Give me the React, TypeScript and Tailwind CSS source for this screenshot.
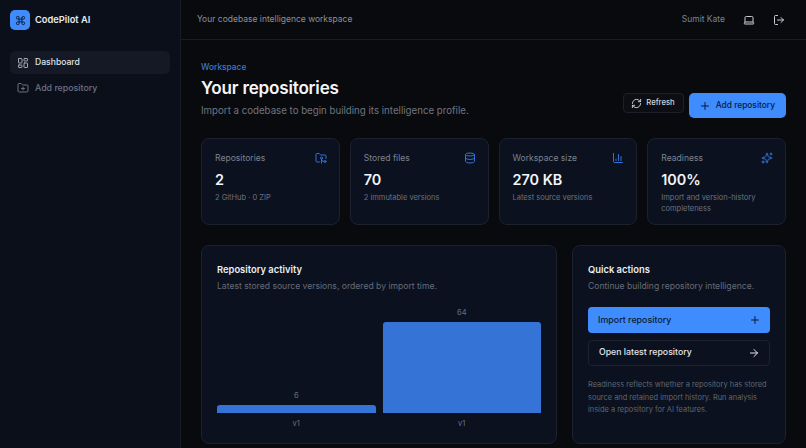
import React from "react";
import {
  ArrowRight,
  ChartColumn,
  Command,
  Database,
  FolderGit2,
  FolderPlus,
  LayoutDashboard,
  Laptop,
  LogOut,
  Plus,
  RefreshCw,
  Sparkles,
} from "lucide-react";

const stats = [
  { label: "Repositories", value: "2", note: "2 GitHub · 0 ZIP", Icon: FolderGit2 },
  { label: "Stored files", value: "70", note: "2 immutable versions", Icon: Database },
  { label: "Workspace size", value: "270 KB", note: "Latest source versions", Icon: ChartColumn },
  { label: "Readiness", value: "100%", note: "Import and version-history completeness", Icon: Sparkles },
];

const bars = [
  { count: 6, height: 8 },
  { count: 64, height: 91 },
];

function Sidebar() {
  return (
    <aside className="w-[181px] shrink-0 border-r border-[#171b25] bg-[#0b0f1a] px-[10px]">
      <div className="flex h-[40px] items-center gap-[5px]">
        <div className="flex h-[20px] w-[20px] items-center justify-center rounded-[5px] bg-[#3f8cff] text-[#0b1a33]">
          <Command className="h-[11px] w-[11px]" strokeWidth={2} />
        </div>
        <span className="text-[9.3px] font-semibold text-[#e8ebf0]">CodePilot AI</span>
      </div>
      <nav className="mt-[11px] flex flex-col gap-[2px]">
        <div className="flex h-[23px] items-center gap-[6px] rounded-[5px] bg-[#141925] px-[7px] text-[8.6px] font-medium text-[#dfe3ea]">
          <LayoutDashboard className="h-[12px] w-[12px] text-[#a2a8b4]" />
          Dashboard
        </div>
        <div className="flex h-[23px] items-center gap-[6px] px-[7px] text-[8.8px] font-medium text-[#6b7280]">
          <FolderPlus className="h-[12px] w-[12px]" />
          Add repository
        </div>
      </nav>
    </aside>
  );
}

function Header() {
  return (
    <header className="flex h-[40px] shrink-0 items-center justify-between border-b border-[#1a1d25] pl-[16px] pr-[21px]">
      <span className="text-[8.5px] text-[#8a909c]">Your codebase intelligence workspace</span>
      <div className="flex items-center gap-[18px] text-[#c9cdd5]">
        <span className="text-[8.5px] text-[#7d838f]">Sumit Kate</span>
        <Laptop className="h-[12px] w-[12px]" />
        <LogOut className="h-[12px] w-[12px]" />
      </div>
    </header>
  );
}

function StatCard({ label, value, note, Icon }: (typeof stats)[number]) {
  return (
    <div className="rounded-[8px] border border-[#1b212d] bg-[#0b111e] pl-[13px] pr-[12px] pt-[13px]">
      <div className="flex h-[12px] items-center justify-between">
        <span className="text-[8.6px] text-[#7d838f]">{label}</span>
        <Icon className="h-[12px] w-[12px] text-[#3272d4]" />
      </div>
      <div className="mt-[6px] text-[14.4px] font-semibold leading-[20px] text-[#f2f4f7]">{value}</div>
      <div className="mt-[3px] text-[7.5px] leading-[10.5px] text-[#6b7280]">{note}</div>
    </div>
  );
}

export default function App() {
  return (
    <div className="flex h-[448px] w-[806px] overflow-hidden bg-[#090a0e] font-['Inter',sans-serif]">
      <Sidebar />
      <div className="flex min-w-0 flex-1 flex-col">
        <Header />
        <main className="flex flex-1 flex-col px-[20px] pt-[21px]">
          <div className="flex items-end justify-between">
            <div>
              <div className="text-[8.4px] font-medium leading-[12px] text-[#3a78d8]">Workspace</div>
              <h1 className="mt-[3px] text-[17.1px] font-semibold leading-[24px] tracking-[-0.2px] text-[#f4f5f7]">
                Your repositories
              </h1>
              <p className="mt-[4px] text-[9.7px] leading-[14px] text-[#6f7581]">
                Import a codebase to begin building its intelligence profile.
              </p>
            </div>
            <div className="flex items-start gap-[5px]">
              <button className="flex h-[20px] items-center gap-[4px] rounded-[4px] border border-[#1c2029] bg-[#0c0e13] pl-[7px] pr-[8px] text-[7.7px] font-medium text-[#d4d7dd]">
                <RefreshCw className="h-[11px] w-[11px]" />
                Refresh
              </button>
              <button className="flex h-[25px] items-center gap-[5px] rounded-[5px] bg-[#3f8cff] pl-[10px] pr-[11px] text-[8.4px] font-medium text-[#0b1a33]">
                <Plus className="h-[12px] w-[12px]" />
                Add repository
              </button>
            </div>
          </div>

          <div className="mt-[20px] grid h-[87px] grid-cols-4 gap-[10px]">
            {stats.map((s) => (
              <StatCard key={s.label} {...s} />
            ))}
          </div>

          <div className="mt-[20px] grid h-[199px] grid-cols-[356px_214px] gap-[15px]">
            <section className="flex flex-col rounded-[8px] border border-[#1b212d] bg-[#0b111e] px-[15px] pt-[17px]">
              <h2 className="text-[9.4px] font-semibold leading-[14px] text-[#eceef2]">Repository activity</h2>
              <p className="mt-[3px] text-[8.6px] leading-[12px] text-[#656c79]">
                Latest stored source versions, ordered by import time.
              </p>
              <div className="mt-[12px] grid grid-cols-2 gap-[7px]">
                {bars.map((b) => (
                  <div key={b.count} className="flex h-[109px] flex-col justify-end">
                    <div className="mb-[4px] text-center text-[7.5px] leading-[10px] text-[#6a707c]">{b.count}</div>
                    <div className="rounded-t-[3px] bg-[#3673d6]" style={{ height: b.height }} />
                  </div>
                ))}
              </div>
              <div className="mt-[6px] grid grid-cols-2 gap-[7px] text-center text-[7.5px] leading-[10px] text-[#6a707c]">
                <span>v1</span>
                <span>v1</span>
              </div>
            </section>

            <section className="flex flex-col rounded-[8px] border border-[#1b212d] bg-[#0b111e] px-[15px] pt-[17px]">
              <h2 className="text-[9.4px] font-semibold leading-[14px] text-[#eceef2]">Quick actions</h2>
              <p className="mt-[3px] text-[8.6px] leading-[12px] text-[#656c79]">
                Continue building repository intelligence.
              </p>
              <button className="mt-[15px] flex h-[26px] items-center justify-between rounded-[4px] bg-[#3f8cff] pl-[10px] pr-[9px] text-[8.9px] font-medium text-[#0b1a33]">
                Import repository
                <Plus className="h-[12px] w-[12px]" />
              </button>
              <button className="mt-[7px] flex h-[26px] items-center justify-between rounded-[4px] border border-[#1c2230] pl-[10px] pr-[9px] text-[8.75px] font-medium text-[#e3e6eb]">
                Open latest repository
                <ArrowRight className="h-[12px] w-[12px]" />
              </button>
              <p className="mt-[13px] text-[7.45px] leading-[12.6px] text-[#5f6673]">
                Readiness reflects whether a repository has stored source and retained import history. Run analysis
                inside a repository for AI features.
              </p>
            </section>
          </div>
        </main>
      </div>
    </div>
  );
}
